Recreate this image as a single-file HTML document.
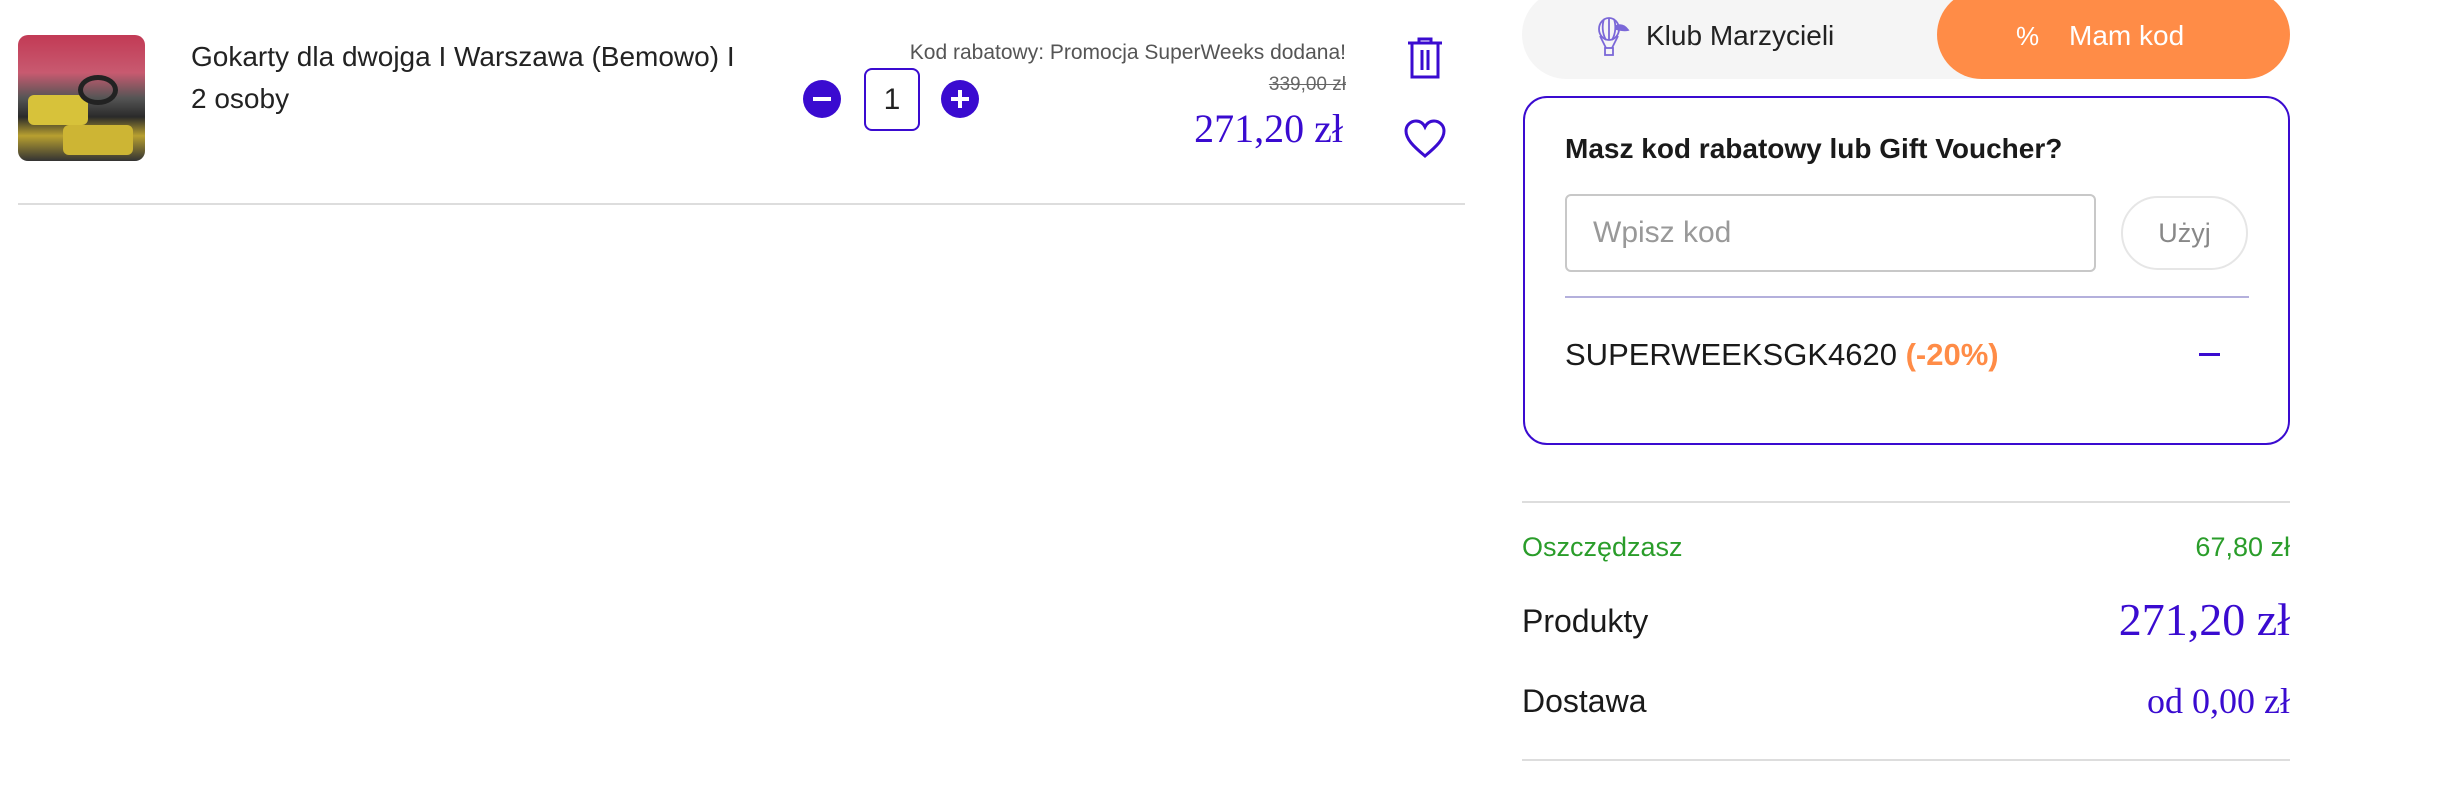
<!DOCTYPE html>
<html><head><meta charset="utf-8"><style>
*{margin:0;padding:0;box-sizing:border-box}
body{width:2454px;height:790px;background:#fff;position:relative;overflow:hidden;font-family:"Liberation Sans",sans-serif;color:#1a1a1a}
.a{position:absolute;white-space:nowrap}
.serif{font-family:"Liberation Serif",serif;color:#3a0bd0}
</style></head><body>
<div class="a" style="left:18px;top:35px;width:127px;height:126px;border-radius:10px;overflow:hidden;background:linear-gradient(180deg,#c23a55 0%,#c85a70 30%,#555 50%,#2a2a2a 65%,#b8a030 80%,#333 100%)">
<div style="position:absolute;left:10px;top:60px;width:60px;height:30px;background:#d7c23a;border-radius:6px"></div>
<div style="position:absolute;left:45px;top:90px;width:70px;height:30px;background:#cdb534;border-radius:6px"></div>
<div style="position:absolute;left:60px;top:40px;width:40px;height:30px;border:5px solid #222;border-radius:50%"></div>
</div>
<div class="a" style="left:191px;top:36px;font-size:28px;line-height:42px;color:#222">Gokarty dla dwojga I Warszawa (Bemowo) I<br>2 osoby</div>
<div class="a" style="left:803px;top:80px;width:38px;height:38px;border-radius:50%;background:#3a0bd0"><div style="position:absolute;left:10px;top:17px;width:18px;height:4px;background:#fff"></div></div>
<div class="a" style="left:864px;top:68px;width:56px;height:63px;border:2px solid #3a0bd0;border-radius:8px;font-size:30px;text-align:center;line-height:59px;color:#222">1</div>
<div class="a" style="left:941px;top:80px;width:38px;height:38px;border-radius:50%;background:#3a0bd0"><div style="position:absolute;left:10px;top:17px;width:18px;height:4px;background:#fff"></div><div style="position:absolute;left:17px;top:10px;width:4px;height:18px;background:#fff"></div></div>
<div class="a" style="right:1108px;top:41px;font-size:21px;color:#555">Kod rabatowy: Promocja SuperWeeks dodana!</div>
<div class="a" style="right:1108px;top:74px;font-size:19px;color:#666;text-decoration:line-through">339,00 zł</div>
<div class="a serif" style="right:1111px;top:105px;font-size:40px">271,20 zł</div>
<svg class="a" style="left:1405px;top:36px" width="40" height="44" viewBox="0 0 40 44" fill="none" stroke="#3a0bd0" stroke-width="3"><path d="M3 7h34M14 7V3h12v4M7 7v34h26V7M17 14v20M23 14v20"/></svg>
<svg class="a" style="left:1403px;top:118px" width="44" height="42" viewBox="0 0 44 42" fill="none" stroke="#3a0bd0" stroke-width="3"><path d="M22 38C10 28 3 21 3 13 3 7 8 3 13 3c4 0 7 2 9 6 2-4 5-6 9-6 5 0 10 4 10 10 0 8-7 15-19 25z"/></svg>
<div class="a" style="left:18px;top:203px;width:1447px;height:2px;background:#ddd"></div>

<div class="a" style="left:1522px;top:-10px;width:768px;height:89px;border-radius:45px;background:#f5f5f5"></div>
<div class="a" style="left:1937px;top:-10px;width:353px;height:89px;border-radius:45px;background:#ff8c47"></div>
<svg class="a" style="left:1596px;top:16px" width="34" height="42" viewBox="0 0 34 42" fill="none" stroke="#7b68d8" stroke-width="1.8"><ellipse cx="13" cy="13" rx="10" ry="11"/><path d="M8 3c-2 6-2 14 2 21M13 2v22M18 3c2 6 2 14-2 21M4 20l6 12M22 20l-6 12"/><rect x="9" y="32" width="8" height="7"/><path d="M20 10c5-2 9 0 12 4-4 1-8 0-12-1z" fill="#7b68d8"/></svg>
<div class="a" style="left:1646px;top:20px;font-size:28px;color:#222">Klub Marzycieli</div>
<div class="a" style="left:2016px;top:21px;font-size:26px;color:#fff">%</div>
<div class="a" style="left:2069px;top:20px;font-size:28px;color:#fff">Mam kod</div>

<div class="a" style="left:1523px;top:96px;width:767px;height:349px;border:2px solid #3a0bd0;border-radius:24px"></div>
<div class="a" style="left:1565px;top:133px;font-size:28px;font-weight:bold;color:#1a1a1a">Masz kod rabatowy lub Gift Voucher?</div>
<div class="a" style="left:1565px;top:194px;width:531px;height:78px;border:2px solid #c8c8c8;border-radius:6px"></div>
<div class="a" style="left:1593px;top:216px;font-size:30px;color:#999">Wpisz kod</div>
<div class="a" style="left:2121px;top:196px;width:127px;height:74px;border:2px solid #e6e6e6;border-radius:37px;font-size:27px;color:#888;text-align:center;line-height:70px">Użyj</div>
<div class="a" style="left:1565px;top:296px;width:684px;height:2px;background:#b4b0dc"></div>
<div class="a" style="left:1565px;top:337px;font-size:31px;color:#1a1a1a">SUPERWEEKSGK4620 <span style="color:#ff8c47;font-weight:bold">(-20%)</span></div>
<div class="a" style="left:2199px;top:353px;width:21px;height:3px;background:#3a0bd0"></div>

<div class="a" style="left:1522px;top:501px;width:768px;height:2px;background:#ddd"></div>
<div class="a" style="left:1522px;top:532px;font-size:27px;color:#2a9d2a">Oszczędzasz</div>
<div class="a" style="right:164px;top:532px;font-size:27px;color:#2a9d2a">67,80 zł</div>
<div class="a" style="left:1522px;top:603px;font-size:32px;color:#1a1a1a">Produkty</div>
<div class="a serif" style="right:164px;top:593px;font-size:46px">271,20 zł</div>
<div class="a" style="left:1522px;top:683px;font-size:32px;color:#1a1a1a">Dostawa</div>
<div class="a serif" style="right:164px;top:680px;font-size:36px">od 0,00 zł</div>
<div class="a" style="left:1522px;top:759px;width:768px;height:2px;background:#ddd"></div>
</body></html>
